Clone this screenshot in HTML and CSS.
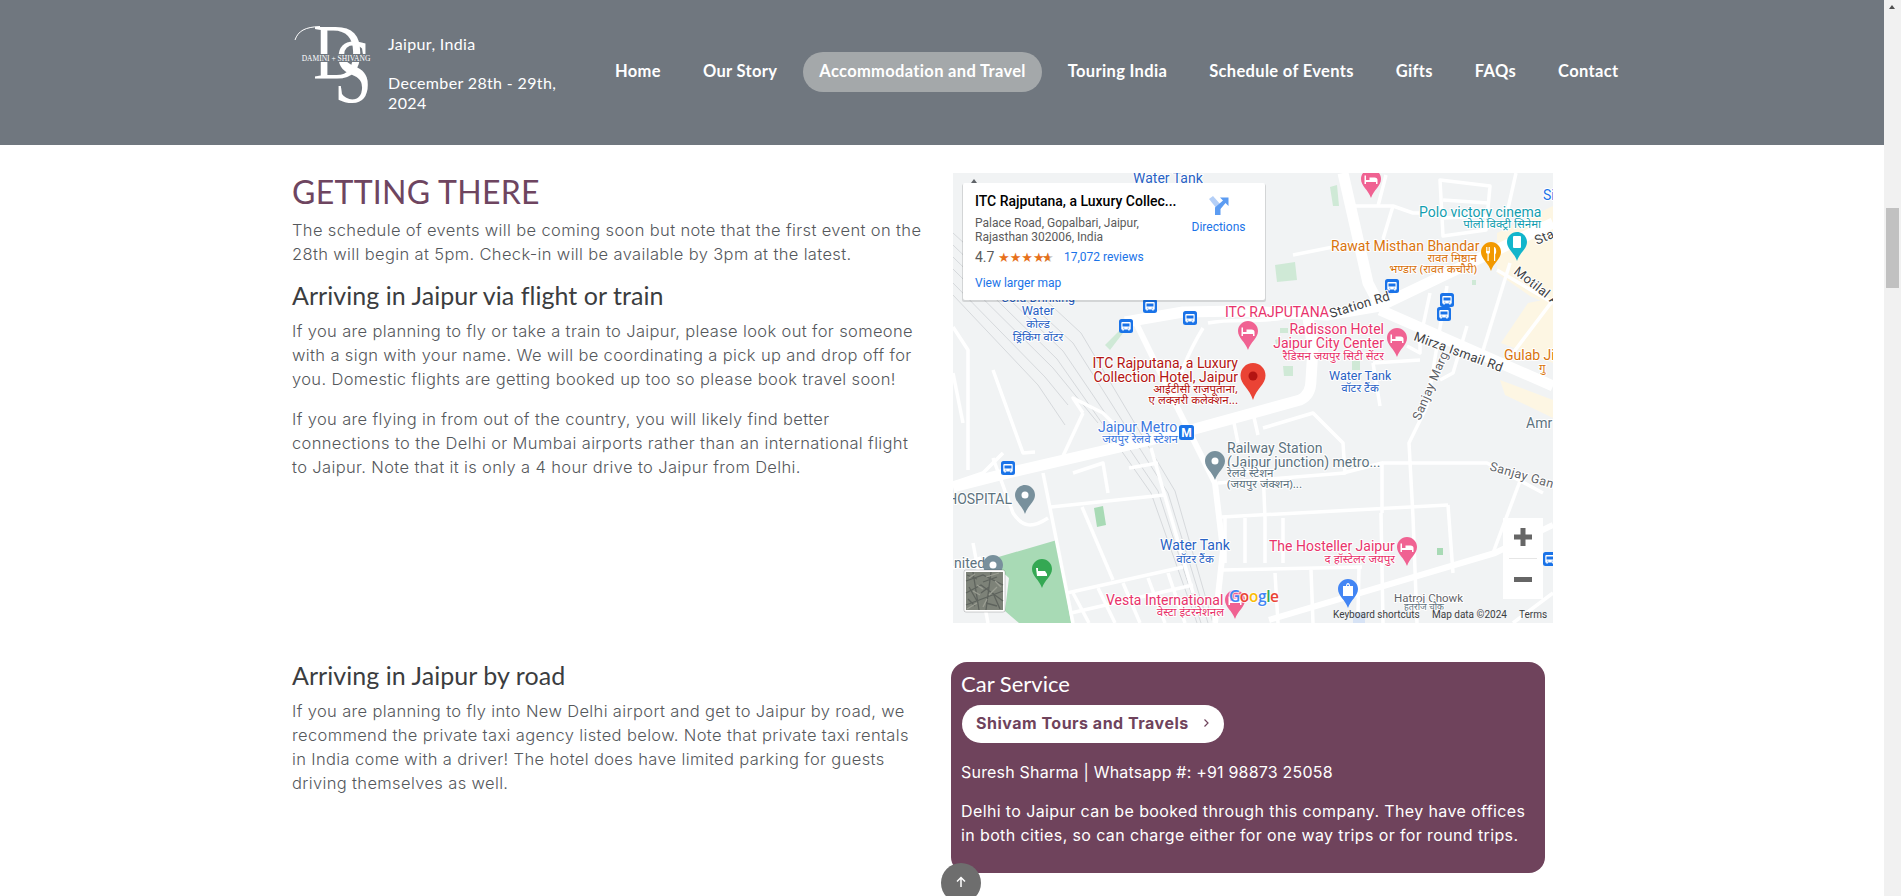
FILE: index.html
```html
<!DOCTYPE html>
<html lang="en">
<head>
<meta charset="utf-8">
<title>Accommodation and Travel</title>
<link rel="stylesheet" href="styles.css">
</head>
<body>
<header class="site-header">
  <div class="brand">
    <svg class="logo" viewBox="0 0 90 90" width="90" height="90" aria-label="Damini and Shivang logo">
      <path class="logo-swash" d="M3 12C6 3 13 -1 28 -1.500"/>
      <text class="logo-d" x="21" y="49.500" textLength="50" lengthAdjust="spacingAndGlyphs">D</text>
      <text class="logo-s" x="42" y="74" textLength="38" lengthAdjust="spacingAndGlyphs">S</text>
      <rect class="logo-band" x="10" y="26" width="68" height="8"/>
      <text class="logo-small" x="44" y="33">DAMINI + SHIVANG</text>
    </svg>
    <div class="brand-text">
      <p>Jaipur, India</p>
      <p>December 28th - 29th, 2024</p>
    </div>
  </div>
  <nav class="nav">
    <a href="#">Home</a>
    <a href="#">Our Story</a>
    <a href="#" class="active">Accommodation and Travel</a>
    <a href="#">Touring India</a>
    <a href="#">Schedule of Events</a>
    <a href="#">Gifts</a>
    <a href="#">FAQs</a>
    <a href="#">Contact</a>
  </nav>
</header>

<main class="content">
  <section class="row row-top">
    <div class="copy">
      <h1>GETTING THERE</h1>
      <p>The schedule of events will be coming soon but note that the first event on the 28th will begin at 5pm. Check-in will be available by 3pm at the latest.</p>
      <h3>Arriving in Jaipur via flight or train</h3>
      <p>If you are planning to fly or take a train to Jaipur, please look out for someone with a sign with your name. We will be coordinating a pick up and drop off for you. Domestic flights are getting booked up too so please book travel soon!</p>
      <p>If you are flying in from out of the country, you will likely find better connections to the Delhi or Mumbai airports rather than an international flight to Jaipur. Note that it is only a 4 hour drive to Jaipur from Delhi.</p>
    </div>
    <svg class="map" viewBox="0 0 600 450" width="600" height="450">
      <defs>
        <path id="pin" d="M10 0C4.500 0 0 4.500 0 10c0 7 7.500 11 10 19 2.500-8 10-12 10-19C20 4.500 15.500 0 10 0z"/>
        <g id="hotel"><use href="#pin" class="pin-pink"/><path class="glyph" d="M3.500 15V6.500h1.500v4.500h3.500V8.500h5c2 0 3 1 3 2.500v4H15v-2H5v2z"/></g>
        <g id="poi"><use href="#pin" class="pin-grey"/><circle class="glyph" cx="10" cy="10" r="3.500"/></g>
        <g id="bus"><rect class="bus-bg" width="14" height="14" rx="2.500"/><path class="glyph" d="M3.500 3h7c.8 0 1.200.5 1.200 1.200V10.500h-1v1H9.200v-1H4.800v1H3.300v-1h-1V4.200c0-.7.500-1.200 1.200-1.200zM3.500 4.500v3h7v-3zM4.300 8.700v.8h1v-.8zm4.400 0v.8h1v-.8z"/></g>
        <clipPath id="half"><rect x="89" y="78" width="7.500" height="14"/></clipPath>
      </defs>
      <rect class="land" width="600" height="450"/>
      <path class="tan" d="M544 60L600 33V133L577 123L544 100zM575 130L600 125V190L548 170zM547 207L600 227V245L552 222z"/>
      <path class="green-pale" d="M322 92L342 89L344 107L324 109zM377 14L384 12L386 33L380 33zM330 193L340 193L340 203L331 203zM327 155L335 155L335 160L327 160zM399 188L407 188L407 197L399 197zM519 107L523 107L523 112L519 112zM322 167L328 165L329 170L323 171z"/>
      <path class="green" d="M141 335L150 333L153 352L144 354zM484 375L490 375L490 382L484 382z"/>
      <path class="green" d="M42 385L104 367L118 450L66 450L52 438L56 405L45 395z"/>
      <path class="green-pale" d="M152 172L166 158L170 160L157 177z"/>
      <g class="rail">
        <path d="M0 60L120 170L215 320L255 450"/><path d="M0 72L110 178L205 318L248 450"/><path d="M0 84L104 186L198 320L244 450"/><path d="M0 96L100 195L145 250"/><path d="M0 110L92 204L115 232"/><path d="M0 122L85 212L112 252"/><path d="M20 60L128 160L222 318L260 450"/>
      </g>
      <g class="road-lg">
        <path d="M0 314L55 300L227 260L347 227Q358 222 358 207L360 175L355 145"/>
        <path d="M390 0L415 110L427 133"/>
        <path d="M172 149L230 139L287 138L374 142L427 133L600 50"/>
        <path d="M427 137L600 213"/>
      </g>
      <g class="road-md">
        <path d="M183 150L227 240L262 310L270 377L262 450"/>
        <path d="M316 447L542 380L600 352"/>
      </g>
      <g class="road-sm">
        <path d="M494 113L474 233L456 270L460 344L464 450"/><path d="M544 97L600 130"/><path d="M557 90L527 187"/><path d="M600 127L560 180"/>
        <path d="M563 0L554 40"/><path d="M487 7L537 13L533 57L490 63Z"/><path d="M490 27L535 30M490 45L533 43"/>
        <path d="M340 82L390 72"/><path d="M400 33L440 33L460 40L480 40"/><path d="M440 33L430 66"/><path d="M425 33L433 2"/>
        <path d="M454 173L467 180L467 167L477 120"/><path d="M420 190L467 187"/><path d="M420 190L427 233"/><path d="M514 153L500 200L487 207"/>
        <path d="M0 154L15 177V297"/><path d="M40 197L70 280L82 279"/>
        <path d="M90 300L118 440L120 450"/><path d="M129 334L160 407"/><path d="M98 334L211 322"/><path d="M114 420L230 394"/>
        <path d="M269 397L409 394"/><path d="M269 344L495 332"/><path d="M429 290L534 290L590 320"/><path d="M390 300L429 290L429 340"/>
        <path d="M310 255L360 240L390 270L392 300L265 310"/><path d="M280 245L285 270M300 240L305 262"/><path d="M272 345V390M292 345V390M312 345V390M330 345V390"/><path d="M275 300L310 296L312 345"/>
        <path d="M130 240L120 225L150 240L185 275"/><path d="M110 283L130 240"/><path d="M40 285L60 340C70 355 80 355 95 345"/><path d="M0 310L30 300L50 280"/>
        <path d="M120 300L150 290L155 320"/><path d="M176 295L205 290"/><path d="M198 275L240 420"/>
        <path d="M120 420L136 450M145 415L162 450M170 410L187 450M195 405L212 450M215 400L232 450"/><path d="M118 440L240 412"/>
        <path d="M325 450L322 400M360 450L358 397M405 440L406 395M430 450L428 340"/><path d="M495 332L500 400"/><path d="M540 380L570 300"/>
        <path d="M560 450L600 420"/>
        <path d="M0 200L10 250"/><path d="M20 370L35 450"/><path d="M0 395L28 385"/><path d="M215 40L270 30M240 0L250 40"/>
        <path d="M250 155C235 180 225 205 222 225"/><path d="M255 150C280 145 300 150 330 145"/>
      </g>

      <text class="lb lb-water" x="180" y="10">Water Tank</text>
      <use href="#hotel" x="408" y="-4"/>
      <text class="lb lb-blue" x="590" y="27">Si</text>
      <text class="lb lb-teal" x="466" y="44">Polo victory cinema</text>
      <text class="lb-hi lb-teal end" x="588" y="55">पोलो विक्ट्री सिनेमा</text>
      <text class="lb lb-orange" x="378" y="78">Rawat Misthan Bhandar</text>
      <text class="lb-hi lb-orange end" x="524" y="89">रावत मिष्ठान</text>
      <text class="lb-hi lb-orange end" x="524" y="100">भण्डार (रावत कचौरी)</text>
      <use href="#pin" x="528" y="69" class="pin-orange"/>
      <path class="glyph" d="M533 74v5c0 1 .8 1.500 1.500 1.700V88h1.200v-7.300c.8-.2 1.300-.7 1.300-1.700v-5h-.8v4h-.8v-4h-.8v4h-.8v-4zM541 74c1.500 0 2.200 2 2.200 4.500 0 1.500-.5 2.500-1 2.800V88H541z"/>
      <use href="#pin" x="554" y="59" class="pin-teal"/>
      <rect class="glyph" x="560" y="63" width="8" height="12" rx="1"/>
      <text class="lb-road" transform="translate(584 72) rotate(-24)">Sta</text>
      <text class="lb-road" transform="translate(560 100) rotate(38)">Motilal A</text>
      <use href="#bus" x="432" y="106"/>
      <use href="#bus" x="487" y="120"/>
      <use href="#bus" x="484" y="134"/>
      <use href="#bus" x="190" y="126"/>
      <use href="#bus" x="230" y="138"/>
      <use href="#bus" x="166" y="146"/>
      <use href="#bus" x="48" y="288"/>
      <use href="#bus" x="590" y="379"/>
      <text class="lb lb-pink" x="272" y="144">ITC RAJPUTANA</text>
      <text class="lb-road" transform="translate(378 145) rotate(-17)">Station Rd</text>
      <use href="#hotel" x="285" y="148"/>
      <text class="lb lb-pink end" x="431" y="161">Radisson Hotel</text>
      <text class="lb lb-pink end" x="431" y="175">Jaipur City Center</text>
      <text class="lb-hi lb-pink end" x="431" y="187">रैडिसन जयपुर सिटी सेंटर</text>
      <use href="#hotel" x="434" y="155"/>
      <text class="lb-road" transform="translate(460 167) rotate(20)">Mirza Ismail Rd</text>
      <text class="lb lb-orange" x="551" y="187">Gulab Ji</text>
      <text class="lb-hi lb-orange" x="586" y="199">गु</text>
      <text class="lb-road-sm" transform="translate(467 248) rotate(-67)">Sanjay Marg</text>
      <text class="lb-water-sm" x="376" y="207">Water Tank</text>
      <text class="lb-hi lb-water mid" x="407" y="219">वॉटर टैंक</text>
      <text class="lb lb-red end" x="285" y="195">ITC Rajputana, a Luxury</text>
      <text class="lb lb-red end" x="285" y="209">Collection Hotel, Jaipur</text>
      <text class="lb-hi lb-red end" x="285" y="220">आईटीसी राजपूताना,</text>
      <text class="lb-hi lb-red end" x="285" y="231">ए लक्ज़री कलेक्शन...</text>
      <path class="pin-red" d="M300 190c-7 0-12.500 5.500-12.500 12.500 0 9 9 13 12.500 24.500 3.500-11.500 12.500-15.500 12.500-24.500 0-7-5.500-12.500-12.500-12.500z"/>
      <circle class="pin-red-dot" cx="300" cy="203" r="4.500"/>
      <text class="lb-water-sm mid" x="85" y="129">Cold Drinking</text>
      <text class="lb-water-sm mid" x="85" y="142">Water</text>
      <text class="lb-hi lb-water mid" x="85" y="155">कोल्ड</text>
      <text class="lb-hi lb-water mid" x="85" y="168">ड्रिंकिंग वॉटर</text>

      <text class="lb lb-blue2" x="145" y="259">Jaipur Metro</text>
      <text class="lb-hi lb-blue2 end" x="225" y="270">जयपुर रेलवे स्टेशन</text>
      <rect class="bus-bg" x="226" y="252" width="15" height="15" rx="2.500"/>
      <text class="metro" x="233.500" y="264">M</text>
      <use href="#poi" x="252" y="278"/>
      <text class="lb lb-grey" x="274" y="280">Railway Station</text>
      <text class="lb lb-grey" x="274" y="294">(Jaipur junction) metro...</text>
      <text class="lb-hi lb-grey" x="274" y="304">रेलवे स्टेशन</text>
      <text class="lb-hi lb-grey" x="274" y="315">(जयपुर जंक्शन)...</text>
      <text class="lb lb-grey" x="573" y="255">Amr</text>
      <text class="lb-road-sm" transform="translate(536 297) rotate(16)">Sanjay Gand</text>
      <text class="lb lb-grey end" x="59" y="331">HOSPITAL</text>
      <use href="#poi" x="62" y="312"/>
      <text class="lb lb-grey" x="1" y="395">nited</text>
      <use href="#poi" x="30" y="382"/>
      <use href="#pin" x="79" y="386" class="pin-green"/>
      <path class="glyph" d="M83 395h2v3h7l2 3v2H84z"/>
      <text class="lb lb-water" x="207" y="377">Water Tank</text>
      <text class="lb-hi lb-water mid" x="242" y="390">वॉटर टैंक</text>
      <text class="lb lb-pink" x="316" y="378">The Hosteller Jaipur</text>
      <text class="lb-hi lb-pink end" x="442" y="390">द हॉस्टेलर जयपुर</text>
      <use href="#hotel" x="444" y="364"/>
      <text class="lb lb-pink" x="153" y="432">Vesta International</text>
      <text class="lb-hi lb-pink end" x="271" y="443">वेस्टा इंटरनेशनल</text>
      <use href="#hotel" x="272" y="417"/>
      <use href="#pin" x="385" y="406" class="pin-blue"/>
      <path class="glyph" d="M390 413h10v10h-10zM393 413c0-4 4-4 4 0h-1c0-2-2-2-2 0z"/>
      <text class="lb-small" x="441" y="429">Hatroj Chowk</text>
      <text class="lb-hi lb-grey mid tiny" x="471" y="437">हतरोज चौक</text>
      <rect class="ghost" x="400" y="439" width="12" height="11"/>

      <text class="google" y="429"><tspan class="g-b" x="276">G</tspan><tspan class="g-r">o</tspan><tspan class="g-y">o</tspan><tspan class="g-b">g</tspan><tspan class="g-g">l</tspan><tspan class="g-r">e</tspan></text>
      <rect class="thumb-frame" x="11" y="397" width="41" height="42" rx="2"/>
      <rect class="thumb" x="13" y="399" width="37" height="38"/>
      <path class="thumb-tex" d="M13 408L30 402L50 412M13 420L28 412L50 428M20 399L26 437M38 399L33 437M13 432L50 418M14 402L24 406M30 409L44 404M16 414L24 428M28 420L36 414M40 420L47 436M15 426L22 433M33 430L44 433"/>
      <path class="thumb-tex-light" d="M16 405L22 401M33 404L46 400M20 418L27 422M36 422L44 414M14 436L24 430M30 434L34 426M42 408L48 414M24 412L30 416"/>
      <text class="attrib" x="380" y="445">Keyboard shortcuts</text>
      <text class="attrib" x="479" y="445">Map data ©2024</text>
      <text class="attrib" x="566" y="445">Terms</text>

      <rect class="panel-z" x="550" y="345" width="40" height="81"/>
      <rect class="sep" x="556" y="385" width="28" height="1"/>
      <path class="zoom-icon" d="M561 361.500h18v5h-18zM567.500 355h5v18h-5zM561 404h18v5h-18z"/>

      <rect class="shadow" x="9" y="11" width="304" height="118" rx="2"/>
      <rect class="panel" x="10" y="10" width="302" height="117" rx="2"/>
      <path class="shade-dark" d="M18 10L21 6L24 10z"/>
      <text class="iw-title" x="22" y="33">ITC Rajputana, a Luxury Collec...</text>
      <text class="iw-addr" x="22" y="54">Palace Road, Gopalbari, Jaipur,</text>
      <text class="iw-addr" x="22" y="68">Rajasthan 302006, India</text>
      <text class="iw-score" x="22" y="89">4.7</text>
      <text class="iw-stars" x="45" y="89">★★★★</text>
      <text class="iw-star-off" x="89" y="89">★</text>
      <text class="iw-stars" x="89" y="89" clip-path="url(#half)">★</text>
      <text class="iw-link" x="111" y="88">17,072 reviews</text>
      <text class="iw-link" x="22" y="114">View larger map</text>
      <path class="dir-light" d="M256 26L260 23L268 32L264 36z"/>
      <path class="dir-dark" d="M262 42V34.500L270 27.500L267 24.500H275.500V33L272.500 30L267.500 36V42z"/>
      <text class="iw-link mid" x="265.500" y="58">Directions</text>
    </svg>
  </section>

  <section class="row row-road">
    <div class="copy">
      <h3>Arriving in Jaipur by road</h3>
      <p>If you are planning to fly into New Delhi airport and get to Jaipur by road, we recommend the private taxi agency listed below. Note that private taxi rentals in India come with a driver! The hotel does have limited parking for guests driving themselves as well.</p>
    </div>
    <aside class="card">
      <h4>Car Service</h4>
      <a href="#" class="card-btn">Shivam Tours and Travels
        <svg class="chev" viewBox="0 0 8 10" width="8" height="10"><path d="M2.500 1.500L6 5L2.500 8.500"/></svg>
      </a>
      <p class="contact">Suresh Sharma | Whatsapp #: +91 98873 25058</p>
      <p>Delhi to Jaipur can be booked through this company. They have offices in both cities, so can charge either for one way trips or for round trips.</p>
    </aside>
  </section>
</main>

<a href="#" class="to-top" aria-label="Back to top">
  <svg viewBox="0 0 14 14" width="14" height="14"><path d="M7 12V2.500M3 6.500L7 2.500L11 6.500"/></svg>
</a>
<div class="scrollbar"><span class="sb-up"></span><span class="sb-thumb"></span></div>
</body>
</html>
```
FILE: styles.css
```css
* { box-sizing: border-box; }
html, body { margin: 0; height: 100%; overflow: hidden; background: #fff; }
body { padding-right: 17px; font-family: Inter, "Open Sans", sans-serif; color: #55585c; }
a { text-decoration: none; }

.site-header { height: 145px; background: #70777f; display: flex; align-items: center; padding-left: 292px; }
.brand { display: flex; align-items: center; width: 307px; flex: none; }
.logo { flex: none; margin-right: 6px; overflow: visible; }
.logo-swash { fill: none; stroke: #fff; stroke-width: 1; }
.logo-d { font: 400 79px "Liberation Serif", serif; fill: #fff; }
.logo-s { font: 400 92px "Liberation Serif", serif; fill: #fff; }
.logo-band { fill: #70777f; }
.logo-small { font: 400 7.500px "Liberation Serif", serif; fill: #fff; text-anchor: middle; }
.brand-text { width: 180px; color: #fff; font: 400 16px/20px Lato, sans-serif; letter-spacing: .35px; margin-top: 1px; }
.brand-text p { margin: 0 0 19px; }
.brand-text p:last-child { margin: 0; }

.nav { display: flex; gap: 10px; margin-top: -1px; }
.nav a { height: 40px; padding: 0 16px; border-radius: 20px; color: #fff; font: 700 16.500px/38px Lato, sans-serif; letter-spacing: .33px; white-space: nowrap; }
.nav a.active { background: #a4a8aa; }

.content { padding-left: 292px; }
.row { display: grid; grid-template-columns: 661px 600px; }
.row-top { padding-top: 28px; height: 517px; }
.copy h1 { margin: 0 0 7px; font: 400 32px/38px Lato, sans-serif; letter-spacing: .3px; color: #6e4560; }
.copy h3 { margin: 11.600px 0 11px; font: 400 25px/26px Lato, sans-serif; letter-spacing: .05px; color: #3b3d40; }
.row-road .copy h3 { margin-top: 0; }
.copy p { margin: 0 0 16px; max-width: 632px; font-size: 16.500px; line-height: 24px; font-weight: 300; letter-spacing: .36px; }
.map { display: block; }

.land { fill: #f1f3f4; }
.tan { fill: #fdf6e3; }
.green { fill: #a8dab5; }
.green-pale { fill: #cfe9d6; }
.ghost { fill: #d7e3f5; }
.rail path { fill: none; stroke: #d6d9dc; stroke-width: 1; }
.road-lg path, .road-md path, .road-sm path { fill: none; stroke: #fff; stroke-linejoin: round; }
.road-lg path { stroke-width: 11; }
.road-md path { stroke-width: 6; }
.road-sm path { stroke-width: 3.500; }
.glyph { fill: #fff; }
.pin-pink { fill: #f06292; }
.pin-grey { fill: #78909c; }
.pin-orange { fill: #f29900; }
.pin-teal { fill: #12b5cb; }
.pin-green { fill: #34a853; }
.pin-blue { fill: #4285f4; }
.pin-red { fill: #ea4335; }
.pin-red-dot { fill: #b31412; }
.bus-bg { fill: #1a73e8; }
.metro { font: 700 12px Roboto, sans-serif; fill: #fff; text-anchor: middle; }

.lb, .lb-hi, .lb-road, .lb-road-sm, .lb-small, .lb-water-sm { paint-order: stroke; stroke: #fff; stroke-width: 2px; stroke-linejoin: round; }
.lb { font: 400 14px Roboto, sans-serif; }
.lb-hi { font: 400 11.500px "Noto Sans", Roboto, sans-serif; }
.tiny { font-size: 9px; }
.lb-road { font: 400 13px Roboto, sans-serif; fill: #3c4043; letter-spacing: .3px; }
.lb-road-sm { font: 400 12.500px Roboto, sans-serif; fill: #5f6368; letter-spacing: .4px; }
.lb-small { font: 400 11.500px Roboto, sans-serif; fill: #5f6368; }
.lb-water-sm { font: 400 12.500px Roboto, sans-serif; fill: #2962c4; }
.lb-water { fill: #2962c4; }
.lb-blue { fill: #1a73e8; }
.lb-blue2 { fill: #3b78e0; }
.lb-teal { fill: #129eaf; }
.lb-orange { fill: #d9730d; }
.lb-pink { fill: #e8336b; }
.lb-red { fill: #b31412; }
.lb-grey { fill: #5d7380; }
.end { text-anchor: end; }
.mid { text-anchor: middle; }

.google { font: 600 15.500px "Open Sans", sans-serif; letter-spacing: -.4px; paint-order: stroke; stroke: rgba(255,255,255,.75); stroke-width: 2px; }
.g-b { fill: #4285f4; } .g-r { fill: #ea4335; } .g-y { fill: #fbbc05; } .g-g { fill: #34a853; }
.thumb-frame { fill: #fff; stroke: rgba(0,0,0,.18); stroke-width: 1; }
.thumb { fill: #7d8278; }
.thumb-tex { fill: none; stroke: #5e635d; stroke-width: 1.300; }
.thumb-tex-light { fill: none; stroke: #9a9d92; stroke-width: 1.300; }
.attrib { font: 400 10px Roboto, sans-serif; fill: #3c4043; }
.panel, .panel-z { fill: #fff; }
.shadow { fill: rgba(0,0,0,.12); }
.sep { fill: #e6e6e6; }
.zoom-icon { fill: #666; }
.shade-dark { fill: #5f6368; }
.iw-title { font: 500 14px Roboto, sans-serif; fill: #000; }
.iw-addr { font: 400 12px Roboto, sans-serif; fill: #5b5b5b; }
.iw-score { font: 400 14px Roboto, sans-serif; fill: #5b5b5b; }
.iw-stars { font: 400 13px "DejaVu Sans", sans-serif; fill: #e7711b; }
.iw-star-off { font: 400 13px "DejaVu Sans", sans-serif; fill: #c4c4c4; }
.iw-link { font: 400 12px Roboto, sans-serif; fill: #1a73e8; }
.dir-light { fill: #b4cff7; }
.dir-dark { fill: #5c9cf2; }

.card { width: 594px; height: 211px; margin-left: -2px; padding: 8px 10px; background: #6f435c; border-radius: 16px; color: #fff; }
.card h4 { margin: 0 0 7px; font: 400 22px/28px Lato, sans-serif; }
.card-btn { display: inline-flex; align-items: center; justify-content: space-between; width: 262px; height: 38px; margin: 0 0 17px 1px; padding: 0 14px 2px; background: #fff; border-radius: 19px; color: #6f435c; font-size: 16px; font-weight: 700; letter-spacing: .5px; }
.card p { margin: 0 0 15px; font-size: 16px; line-height: 24px; letter-spacing: .38px; }
.card .contact { letter-spacing: .2px; }
.chev { fill: none; stroke: #6f435c; stroke-width: 1.200; }

.to-top { position: fixed; left: 941px; top: 863px; width: 40px; height: 40px; border-radius: 50%; background: #6e6e6e; display: flex; align-items: center; justify-content: center; }
.to-top svg { fill: none; stroke: #fff; stroke-width: 1.500; margin-top: -3px; }

.scrollbar { position: fixed; top: 0; right: 0; width: 17px; height: 100%; background: #f1f1f1; }
.sb-up { position: absolute; top: 5px; left: 5px; border: 3.500px solid transparent; border-top: 0; border-bottom: 4px solid #505050; }
.sb-thumb { position: absolute; top: 208px; left: 2px; width: 13px; height: 80px; background: #c1c1c1; }
```
